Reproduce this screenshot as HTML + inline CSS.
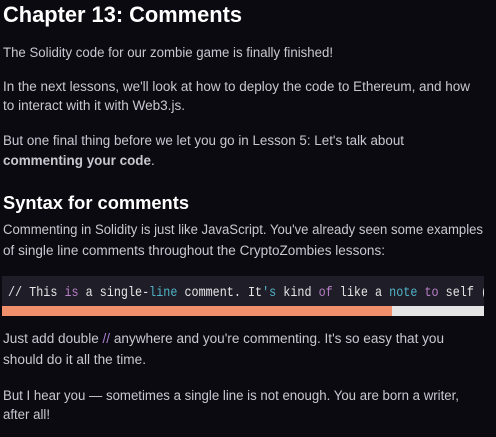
<!DOCTYPE html>
<html><head><meta charset="utf-8"><style>
html,body{margin:0;padding:0;background:#0b0a11;width:496px;height:437px;overflow:hidden}
svg{display:block}
.t{font-family:"Liberation Sans",sans-serif;font-size:13.5px;fill:#c9c8d0}
.h{font-family:"Liberation Sans",sans-serif;font-weight:bold;fill:#fff}
.m{font-family:"Liberation Mono",monospace;font-size:14px;fill:#e6e6e6}
.p{fill:#b77fc6}.c{fill:#4fb3c8}
</style></head><body>
<svg width="496" height="437">
<text class="h" x="3" y="22" font-size="22" textLength="239" lengthAdjust="spacingAndGlyphs">Chapter 13: Comments</text>
<text class="t" x="3" y="57" textLength="330" lengthAdjust="spacingAndGlyphs">The Solidity code for our zombie game is finally finished!</text>
<text class="t" x="3" y="91" textLength="467" lengthAdjust="spacingAndGlyphs">In the next lessons, we'll look at how to deploy the code to Ethereum, and how</text>
<text class="t" x="3" y="110" textLength="182" lengthAdjust="spacingAndGlyphs">to interact with it with Web3.js.</text>
<text class="t" x="3" y="145" textLength="401" lengthAdjust="spacingAndGlyphs">But one final thing before we let you go in Lesson 5: Let's talk about</text>
<text class="t" x="3" y="165" font-weight="bold" fill="#dcdce2" textLength="148" lengthAdjust="spacingAndGlyphs">commenting your code</text>
<text class="t" x="151" y="165">.</text>
<text class="h" x="3" y="209" font-size="18" textLength="186" lengthAdjust="spacingAndGlyphs">Syntax for comments</text>
<text class="t" x="3" y="234" textLength="480" lengthAdjust="spacingAndGlyphs">Commenting in Solidity is just like JavaScript. You've already seen some examples</text>
<text class="t" x="3" y="255" textLength="382" lengthAdjust="spacingAndGlyphs">of single line comments throughout the CryptoZombies lessons:</text>
<rect x="2" y="276" width="482" height="30" fill="#1f1d27"/>
<rect x="2" y="306" width="390" height="10" fill="#ef8f6b"/>
<rect x="392" y="306" width="92" height="10" fill="#e4e4e4"/>
<svg x="2" y="276" width="482" height="30">
<text class="m" x="6" y="20" textLength="480" lengthAdjust="spacingAndGlyphs">// This <tspan class="p">is</tspan> a single-<tspan class="c">line</tspan> comment. It<tspan class="c">'s</tspan> kind <tspan class="p">of</tspan> like a <tspan class="c">note</tspan> <tspan class="p">to</tspan> self (</text>
</svg>
<text class="t" x="3" y="343" textLength="441" lengthAdjust="spacingAndGlyphs">Just add double <tspan fill="#a77fd0">//</tspan> anywhere and you're commenting. It's so easy that you</text>
<text class="t" x="3" y="364" textLength="143" lengthAdjust="spacingAndGlyphs">should do it all the time.</text>
<text class="t" x="3" y="400" textLength="456" lengthAdjust="spacingAndGlyphs">But I hear you — sometimes a single line is not enough. You are born a writer,</text>
<text class="t" x="3" y="419" textLength="47" lengthAdjust="spacingAndGlyphs">after all!</text>
</svg>
</body></html>
